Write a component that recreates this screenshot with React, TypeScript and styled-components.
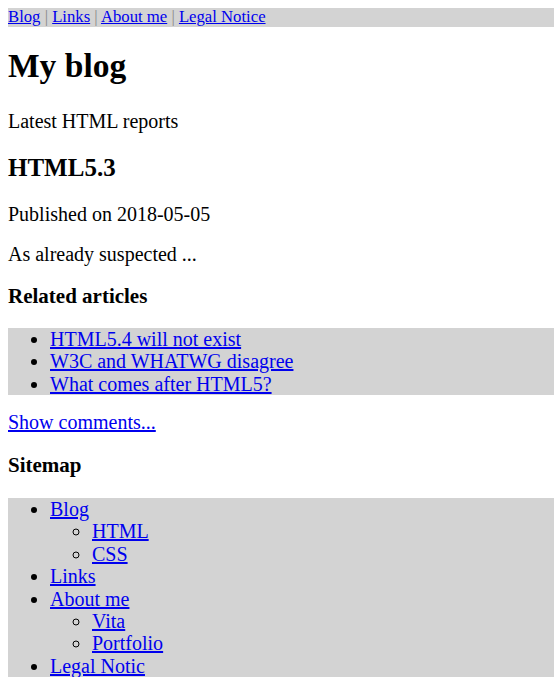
import React from "react";
import styled, { createGlobalStyle } from "styled-components";

const Global = createGlobalStyle`
  html, body { margin: 0; padding: 0; background: #fff; }
  body {
    padding: 8px 0 0 8px;
    font-family: "Liberation Serif", "Times New Roman", serif;
    color: #000;
  }
  a { color: #0000ee; text-decoration: underline; }
`;

const Nav = styled.nav`
  background: #d3d3d3;
  font-size: 16.7px;
  line-height: 18.7px;
  white-space: nowrap;
`;

const Sep = styled.span`
  color: #8a8a8a;
`;

const Title = styled.h1<{ $gap: number }>`
  margin: ${(p) => p.$gap}px 0 0;
  font-size: 33.5px;
  line-height: 38.5px;
  font-weight: bold;
`;

const Heading2 = styled.h2<{ $gap: number }>`
  margin: ${(p) => p.$gap}px 0 0;
  font-size: 25px;
  line-height: 28.7px;
  font-weight: bold;
`;

const Heading3 = styled.h3<{ $gap: number }>`
  margin: ${(p) => p.$gap}px 0 0;
  font-size: 21px;
  line-height: 24.1px;
  font-weight: bold;
`;

const Para = styled.p<{ $gap: number }>`
  margin: ${(p) => p.$gap}px 0 0;
  font-size: 20px;
  line-height: 23px;
`;

const List = styled.ul<{ $gap: number }>`
  margin: ${(p) => p.$gap}px 0 0;
  padding: 0 0 0 42px;
  background: #d3d3d3;
  font-size: 20px;
  line-height: 22.4px;
  list-style: disc;
`;

const SubList = styled.ul`
  margin: 0;
  padding: 0 0 0 42px;
  list-style: circle;
`;

const Item = styled.li``;

const navLinks = ["Blog", "Links", "About me", "Legal Notice"];

const related = [
  "HTML5.4 will not exist",
  "W3C and WHATWG disagree",
  "What comes after HTML5?",
];

const sitemap: { label: string; children?: string[] }[] = [
  { label: "Blog", children: ["HTML", "CSS"] },
  { label: "Links" },
  { label: "About me", children: ["Vita", "Portfolio"] },
  { label: "Legal Notic" },
];

export default function App() {
  return (
    <>
      <Global />
      <Nav>
        {navLinks.map((l, i) => (
          <React.Fragment key={l}>
            {i > 0 && <Sep> | </Sep>}
            <a href="#">{l}</a>
          </React.Fragment>
        ))}
      </Nav>
      <Title $gap={20.75}>My blog</Title>
      <Para $gap={23.6}>Latest HTML reports</Para>
      <Heading2 $gap={21.1}>HTML5.3</Heading2>
      <Para $gap={20.9}>Published on 2018-05-05</Para>
      <Para $gap={16.3}>As already suspected ...</Para>
      <Heading3 $gap={18.7}>Related articles</Heading3>
      <List $gap={19.7}>
        {related.map((r) => (
          <Item key={r}>
            <a href="#">{r}</a>
          </Item>
        ))}
      </List>
      <Para $gap={15.8}>
        <a href="#">Show comments...</a>
      </Para>
      <Heading3 $gap={19}>Sitemap</Heading3>
      <List $gap={20.8}>
        {sitemap.map((s) => (
          <Item key={s.label}>
            <a href="#">{s.label}</a>
            {s.children && (
              <SubList>
                {s.children.map((c) => (
                  <Item key={c}>
                    <a href="#">{c}</a>
                  </Item>
                ))}
              </SubList>
            )}
          </Item>
        ))}
      </List>
    </>
  );
}
